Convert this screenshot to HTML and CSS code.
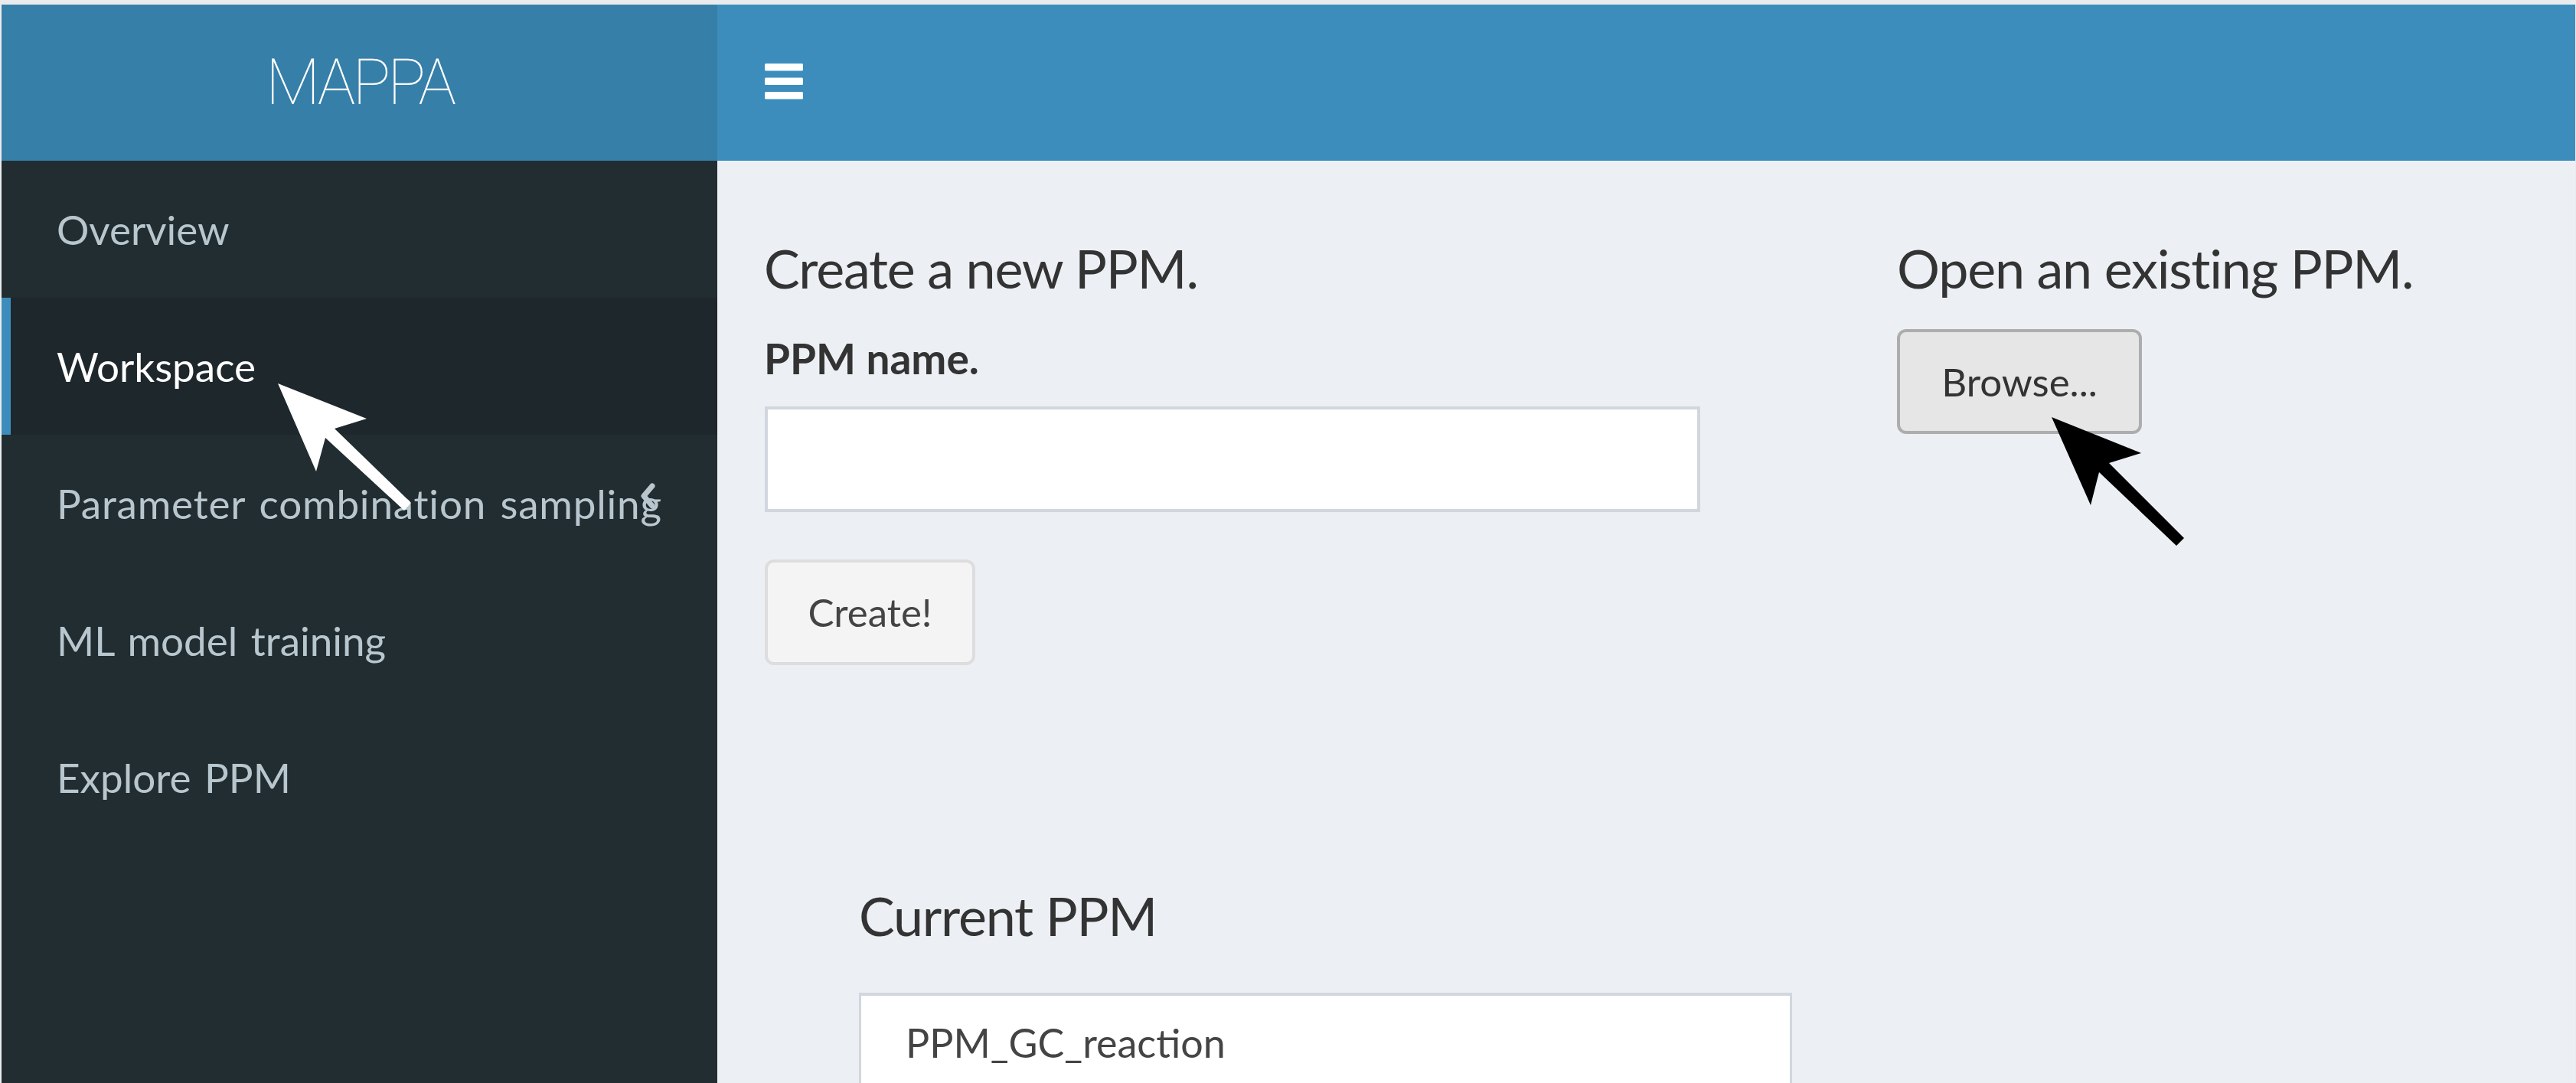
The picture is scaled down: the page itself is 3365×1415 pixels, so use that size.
FILE: index.html
```html
<!DOCTYPE html>
<html lang="en">
<head>
<meta charset="utf-8">
<title>MAPPA</title>
<link rel="stylesheet" href="styles.css">
</head>
<body>
<div class="app">
  <div class="logo">MAPPA</div>
  <nav class="navbar">
    <button class="toggle" aria-label="Toggle navigation">
      <svg width="50" height="48" viewBox="0 0 50 48">
        <rect x="0" y="0" width="50" height="9.5" rx="1.5" fill="#fff"/>
        <rect x="0" y="18.5" width="50" height="9.5" rx="1.5" fill="#fff"/>
        <rect x="0" y="37" width="50" height="9.5" rx="1.5" fill="#fff"/>
      </svg>
    </button>
  </nav>
  <aside class="sidebar">
    <ul class="menu">
      <li>Overview</li>
      <li class="active">Workspace</li>
      <li class="treeview">Parameter combination sampling
        <svg class="angle" width="20" height="34" viewBox="0 0 20 34">
          <polyline points="15,4 4,17 15,30" fill="none" stroke="#b8c7ce" stroke-width="7" stroke-linecap="round" stroke-linejoin="round"/>
        </svg>
      </li>
      <li>ML model training</li>
      <li>Explore PPM</li>
    </ul>
  </aside>
  <main class="content">
    <div class="row">
      <section class="col col-create">
        <h4 class="title">Create a new PPM.</h4>
        <label class="field-label" for="ppm-name">PPM name.</label>
        <input id="ppm-name" class="text-input" type="text">
        <button class="btn btn-create">Create!</button>
      </section>
      <section class="col col-open">
        <h4 class="title">Open an existing PPM.</h4>
        <button class="btn btn-browse">Browse...</button>
      </section>
    </div>
    <section class="current">
      <h4 class="title">Current PPM</h4>
      <div class="output-box">PPM_GC_reaction</div>
    </section>
  </main>
</div>
<svg class="annotations" width="3365" height="1415" viewBox="0 0 3365 1415">
  <polygon points="363,501 479,547 437,560 537,657 528,667 425,572 413,616" fill="#fff"/>
  <polygon points="2680,545 2797,592 2755,605 2853,703 2843,713 2742,617 2731,660" fill="#000"/>
</svg>
</body>
</html>
```

FILE: styles.css
```css
html, body {
  margin: 0;
  padding: 0;
}

body {
  width: 3365px;
  height: 1415px;
  overflow: hidden;
  position: relative;
  background: #eaebed;
  font-family: Lato, "Open Sans", "DejaVu Sans", sans-serif;
  color: #333;
}

.app {
  margin: 6px 1px 0 2px;
  height: 1409px;
  display: grid;
  grid-template-columns: 935px 1fr;
  grid-template-rows: 204px 1fr;
  background: #ecf0f5;
  overflow: hidden;
}

.logo {
  background: #367fa9;
  color: #fff;
  font-family: Roboto, Lato, sans-serif;
  font-weight: 100;
  font-size: 83px;
  line-height: 204px;
  text-align: center;
  letter-spacing: -4px;
}

.navbar {
  background: #3c8dbc;
  display: flex;
  align-items: flex-start;
  padding-left: 62px;
}

.toggle {
  margin-top: 77px;
  padding: 0;
  border: 0;
  background: none;
  display: block;
  line-height: 0;
}

.sidebar {
  background: #222d32;
}

.menu {
  list-style: none;
  margin: 0;
  padding: 0;
}

.menu li {
  position: relative;
  height: 179px;
  line-height: 179px;
  border-left: 12px solid transparent;
  padding-left: 60px;
  color: #b8c7ce;
  font-size: 53px;
  word-spacing: 4px;
  white-space: nowrap;
}

.menu li.treeview {
  letter-spacing: 0.8px;
}

.menu li.active {
  background: #1e282c;
  border-left-color: #3c8dbc;
  color: #fff;
}

.angle {
  position: absolute;
  right: 80px;
  top: 63px;
}

.content {
  padding: 100px 0 0 61px;
}

.row {
  display: grid;
  grid-template-columns: 1480px auto;
}

.col {
  display: flex;
  flex-direction: column;
  align-items: flex-start;
}

.title {
  margin: 0;
  font-size: 70px;
  font-weight: 400;
  line-height: 80px;
  letter-spacing: -1.2px;
  color: #333;
}

.field-label {
  margin-top: 48px;
  font-size: 55px;
  font-weight: 700;
  line-height: 60px;
  color: #333;
}

.text-input {
  margin: 33px 0 0 1px;
  width: 1222px;
  height: 138px;
  box-sizing: border-box;
  border: 4px solid #d2d6de;
  background: #fff;
  font-family: inherit;
  font-size: 52px;
  outline: none;
}

.btn {
  box-sizing: border-box;
  height: 138px;
  border-radius: 12px;
  font-family: inherit;
  font-size: 51px;
  line-height: 130px;
  padding: 0;
  text-align: center;
  color: #444;
}

.btn-create {
  margin: 62px 0 0 1px;
  width: 275px;
  background: #f4f4f4;
  border: 4px solid #ddd;
}

.btn-browse {
  margin-top: 40px;
  width: 320px;
  height: 137px;
  line-height: 129px;
  background: #e6e6e6;
  border: 4px solid #adadad;
  color: #333;
}

.current {
  margin-top: 287px;
  padding-left: 124px;
}

.output-box {
  margin-top: 61px;
  width: 1219px;
  height: 220px;
  box-sizing: border-box;
  border: 3px solid #d2d6de;
  border-top-width: 4px;
  background: #fff;
  padding: 31px 58px;
  font-size: 52px;
  line-height: 60px;
  color: #444;
}

.annotations {
  position: absolute;
  left: 0;
  top: 0;
  pointer-events: none;
}
```
